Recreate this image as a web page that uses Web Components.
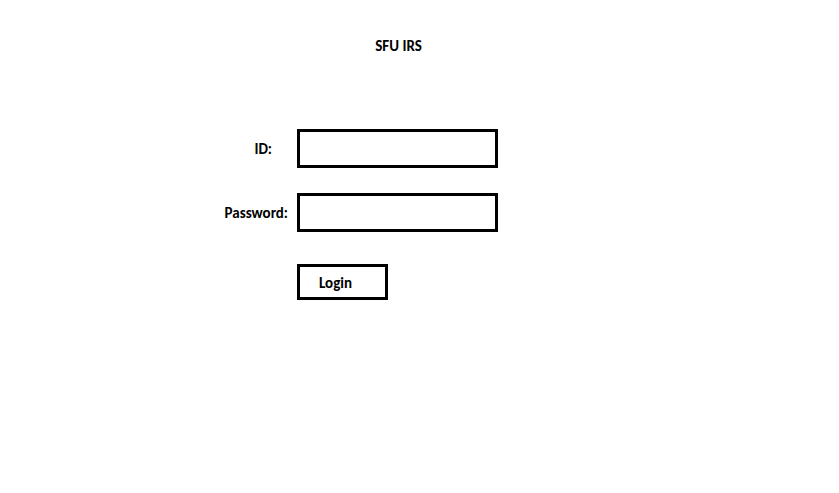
<!DOCTYPE html>
<html lang="en">
<head>
<meta charset="utf-8">
<meta name="viewport" content="width=device-width, initial-scale=1">
<title>SFU IRS</title>
<style>
  body { margin: 0; background: #fff; color: #000; font: bold 15px/20px Carlito, Lato, "Open Sans", sans-serif; }
</style>
</head>
<body>
<login-page heading="SFU IRS">
  <login-field label="ID:" type="text" name="id" class="short"></login-field>
  <login-field label="Password:" type="password" name="password"></login-field>
  <login-button>Login</login-button>
</login-page>

<template id="page-template">
  <style>
    :host { display: block; --columns: 297fr 201fr 341fr; }
    main { padding: 36px 0; }
    h1 { margin: 0; font: inherit; text-align: center; }
    header, form ::slotted(*) { display: grid; grid-template-columns: var(--columns); }
    h1 { grid-column: 2; padding-left: 2px; }
    form { display: flex; flex-direction: column; gap: 25px; margin: 73px 0 0; }
    ::slotted(login-button) { margin-top: 7px; }
  </style>
  <main>
    <header><h1></h1></header>
    <form><slot></slot></form>
  </main>
</template>

<template id="field-template">
  <style>
    :host { align-items: center; }
    label { justify-self: end; padding-right: 9px; }
    :host(.short) label { padding-right: 25px; }
    input { box-sizing: border-box; width: 100%; min-width: 0; height: 39px; margin: 0; padding: 0 8px;
      border: 3px solid #000; border-radius: 0; background: #fff; color: inherit; font: inherit; }
  </style>
  <label for="field"></label>
  <input id="field">
</template>

<template id="button-template">
  <style>
    button { grid-column: 2; justify-self: start; width: 91px; height: 36px; margin: 0; padding: 2px 0 0 19px;
      border: 3px solid #000; border-radius: 0; background: #fff; color: inherit; font: inherit; text-align: left; }
  </style>
  <button type="button"><slot></slot></button>
</template>

<script>
  class TemplateElement extends HTMLElement {
    constructor() {
      super();
      const template = document.getElementById(this.constructor.template);
      this.attachShadow({ mode: "open" }).append(template.content.cloneNode(true));
    }
  }
  class LoginPage extends TemplateElement {
    static template = "page-template";
    connectedCallback() {
      this.shadowRoot.querySelector("h1").textContent = this.getAttribute("heading");
    }
  }
  class LoginField extends TemplateElement {
    static template = "field-template";
    connectedCallback() {
      this.shadowRoot.querySelector("label").textContent = this.getAttribute("label");
      const input = this.shadowRoot.querySelector("input");
      input.type = this.getAttribute("type");
      input.name = this.getAttribute("name");
    }
  }
  class LoginButton extends TemplateElement {
    static template = "button-template";
  }
  customElements.define("login-page", LoginPage);
  customElements.define("login-field", LoginField);
  customElements.define("login-button", LoginButton);
</script>
</body>
</html>
